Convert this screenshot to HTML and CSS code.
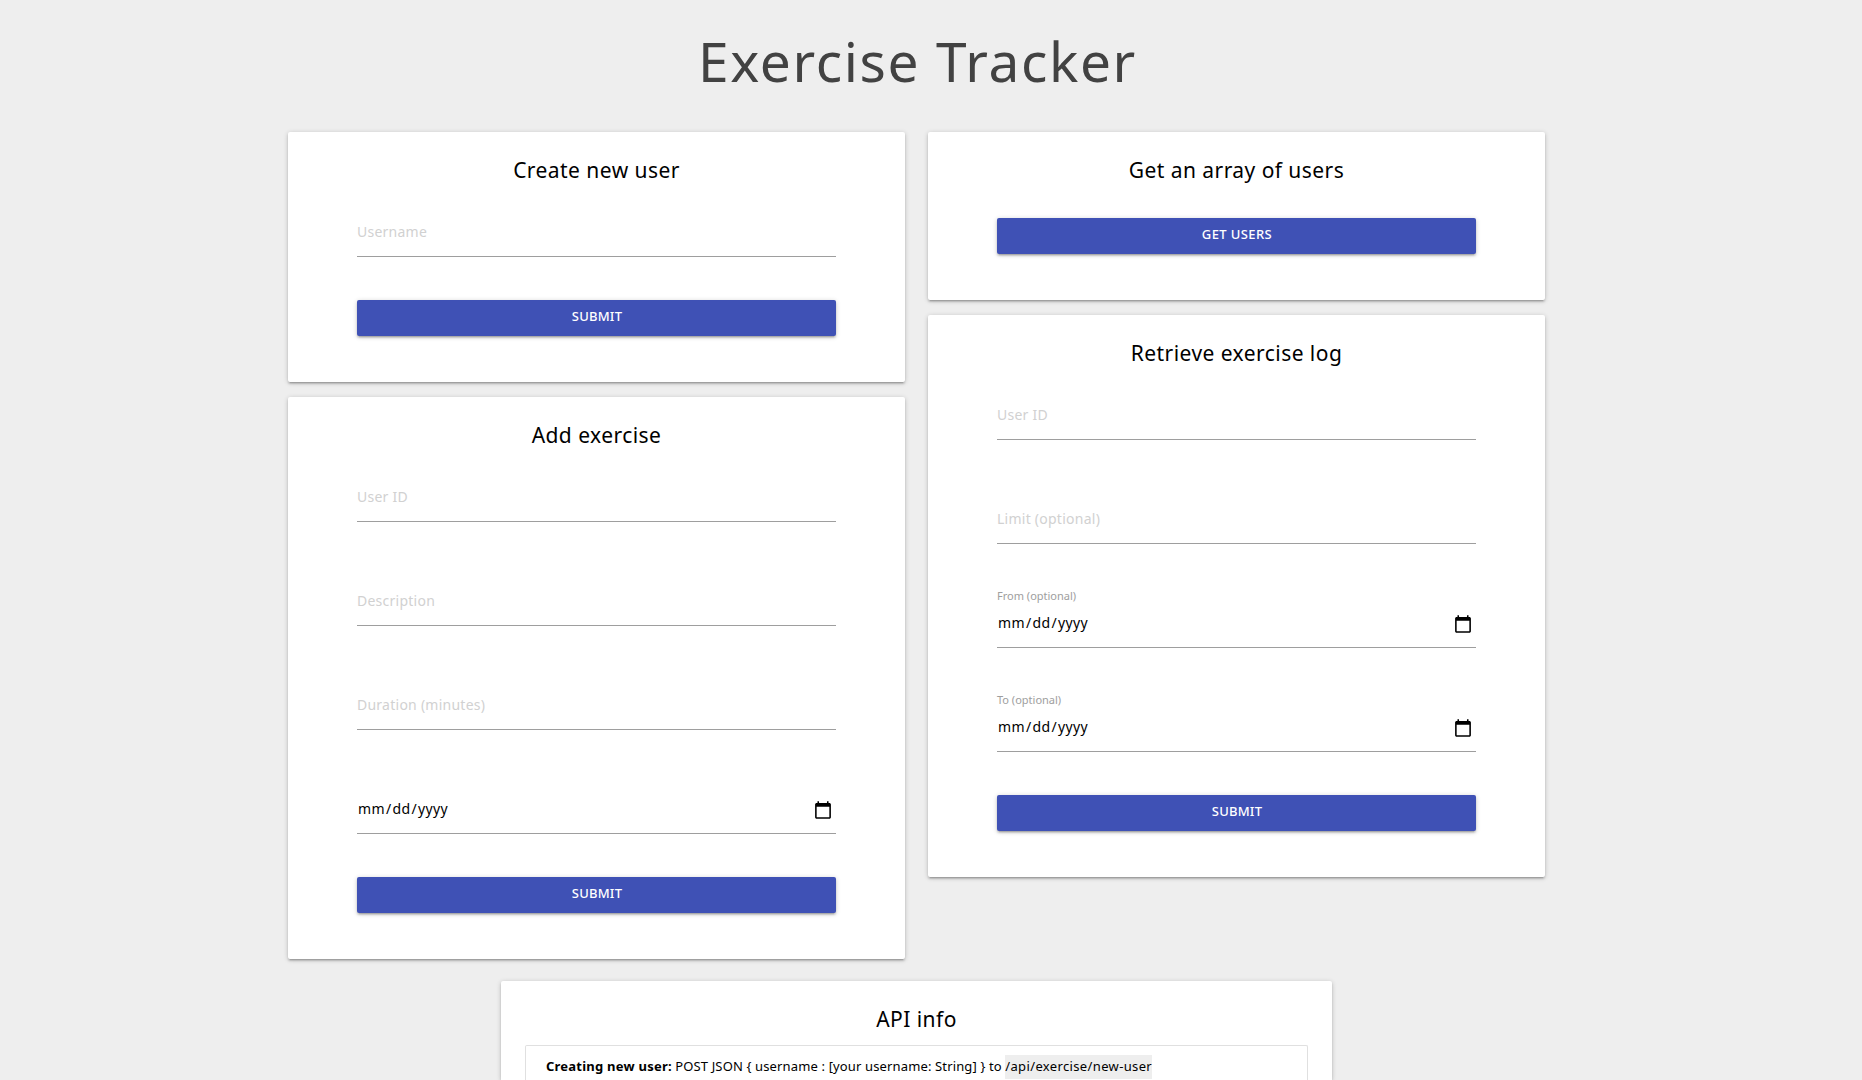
FILE: index.html
```html
<!DOCTYPE html>
<html lang="en">
<head>
<meta charset="utf-8">
<title>Exercise Tracker</title>
<link rel="stylesheet" href="styles.css">
</head>
<body>
<main class="page">
  <h1 class="page-title">Exercise Tracker</h1>
  <div class="columns">
    <div class="column">
      <section class="card">
        <h2 class="card-title">Create new user</h2>
        <form class="form">
          <div class="field"><input class="input" type="text" placeholder="Username"></div>
          <button class="btn" type="button">SUBMIT</button>
        </form>
      </section>
      <section class="card">
        <h2 class="card-title">Add exercise</h2>
        <form class="form">
          <div class="field"><input class="input" type="text" placeholder="User ID"></div>
          <div class="field"><input class="input" type="text" placeholder="Description"></div>
          <div class="field"><input class="input" type="text" placeholder="Duration (minutes)"></div>
          <div class="field"><input class="input date" type="date"></div>
          <button class="btn" type="button">SUBMIT</button>
        </form>
      </section>
    </div>
    <div class="column">
      <section class="card">
        <h2 class="card-title">Get an array of users</h2>
        <form class="form form-single">
          <button class="btn btn-users" type="button">GET USERS</button>
        </form>
      </section>
      <section class="card">
        <h2 class="card-title">Retrieve exercise log</h2>
        <form class="form">
          <div class="field"><input class="input" type="text" placeholder="User ID"></div>
          <div class="field"><input class="input" type="text" placeholder="Limit (optional)"></div>
          <div class="field"><label class="label" for="from">From (optional)</label><input class="input date" id="from" type="date"></div>
          <div class="field"><label class="label" for="to">To (optional)</label><input class="input date" id="to" type="date"></div>
          <button class="btn" type="button">SUBMIT</button>
        </form>
      </section>
    </div>
  </div>
  <section class="card api">
    <h2 class="card-title api-title">API info</h2>
    <ul class="collection">
      <li class="item"><b class="item-name">Creating new user:</b> <span class="item-text">POST JSON { username : [your username: String] } to</span> <code class="path">/api/exercise/new-user</code></li>
    </ul>
  </section>
</main>
</body>
</html>
```
FILE: styles.css
```css
html,
body {
  height: 100%;
}

body {
  margin: 0;
  overflow: hidden;
  background: #eee;
  color: #000;
  font-family: "Noto Sans", "Open Sans", sans-serif;
}

.page {
  display: flex;
  flex-direction: column;
  width: 1833px;
  height: 1080px;
}

.page-title {
  margin: 0 0 11px;
  padding-left: 2px;
  color: #424242;
  font-size: 55px;
  font-weight: 400;
  line-height: 121px;
  letter-spacing: 1.6px;
  text-align: center;
}

.columns {
  display: flex;
  justify-content: center;
  align-items: flex-start;
  gap: 23px;
}

.column {
  display: flex;
  flex-direction: column;
  gap: 15px;
  width: 617px;
}

.card {
  background: #fff;
  border-radius: 2px;
  box-shadow: 0 2px 2px 0 rgba(0, 0, 0, .14), 0 3px 1px -2px rgba(0, 0, 0, .12), 0 1px 5px 0 rgba(0, 0, 0, .2);
}

.card-title {
  margin: 0;
  font-size: 21px;
  font-weight: 400;
  line-height: 76px;
  letter-spacing: .45px;
  text-align: center;
}

.form {
  display: flex;
  flex-direction: column;
  padding: 0 69px 46px;
}

.form-single {
  padding-top: 10px;
}

.field {
  position: relative;
  margin-bottom: 55px;
}

.field:nth-last-child(2) {
  margin-bottom: 43px;
}

.input {
  display: block;
  box-sizing: border-box;
  width: 100%;
  height: 49px;
  padding: 0 1px 2px 0;
  border: 0;
  border-bottom: 1px solid #9e9e9e;
  outline: 0;
  background: transparent;
  color: #000;
  font: 400 14px "Noto Sans", sans-serif;
  letter-spacing: .25px;
}

.input::placeholder {
  color: #d1d1d1;
}

.date {
  padding: 0 3px 2px 0;
  letter-spacing: .35px;
}

.date::-webkit-calendar-picker-indicator {
  width: 20px;
  height: 20px;
  padding: 0;
  transform: translateY(2.5px);
}

.label {
  position: absolute;
  top: -11px;
  left: 0;
  color: #9e9e9e;
  font-size: 11px;
  line-height: 16px;
}

.btn {
  height: 36px;
  padding: 0 0 4px 1px;
  border: 0;
  border-radius: 2px;
  background: #3f51b5;
  box-shadow: 0 2px 2px 0 rgba(0, 0, 0, .14), 0 3px 1px -2px rgba(0, 0, 0, .12), 0 1px 5px 0 rgba(0, 0, 0, .2);
  color: #fff;
  font: 500 13px/32px "Noto Sans", sans-serif;
  letter-spacing: .2px;
}

.btn-users {
  letter-spacing: .4px;
}

.api {
  display: flex;
  flex-direction: column;
  flex: 1;
  min-height: 0;
  width: 831px;
  margin: 22px auto 0;
  border-radius: 2px 2px 0 0;
}

.api-title {
  height: 64px;
}

.collection {
  flex: 1;
  margin: 0 24px;
  padding: 0;
  border: 1px solid #e0e0e0;
  border-bottom: 0;
  border-radius: 2px 2px 0 0;
  list-style: none;
}

.item {
  padding: 10px 20px 4px;
  font-size: 13px;
  line-height: 20px;
  white-space: nowrap;
}

.item-name {
  font-weight: 700;
  letter-spacing: .23px;
}

.item-text {
  font-weight: 400;
  letter-spacing: .14px;
}

.path {
  padding: 2px 0 4px;
  background: #eee;
  font: 400 13px "Noto Sans", sans-serif;
  letter-spacing: .36px;
}
```
